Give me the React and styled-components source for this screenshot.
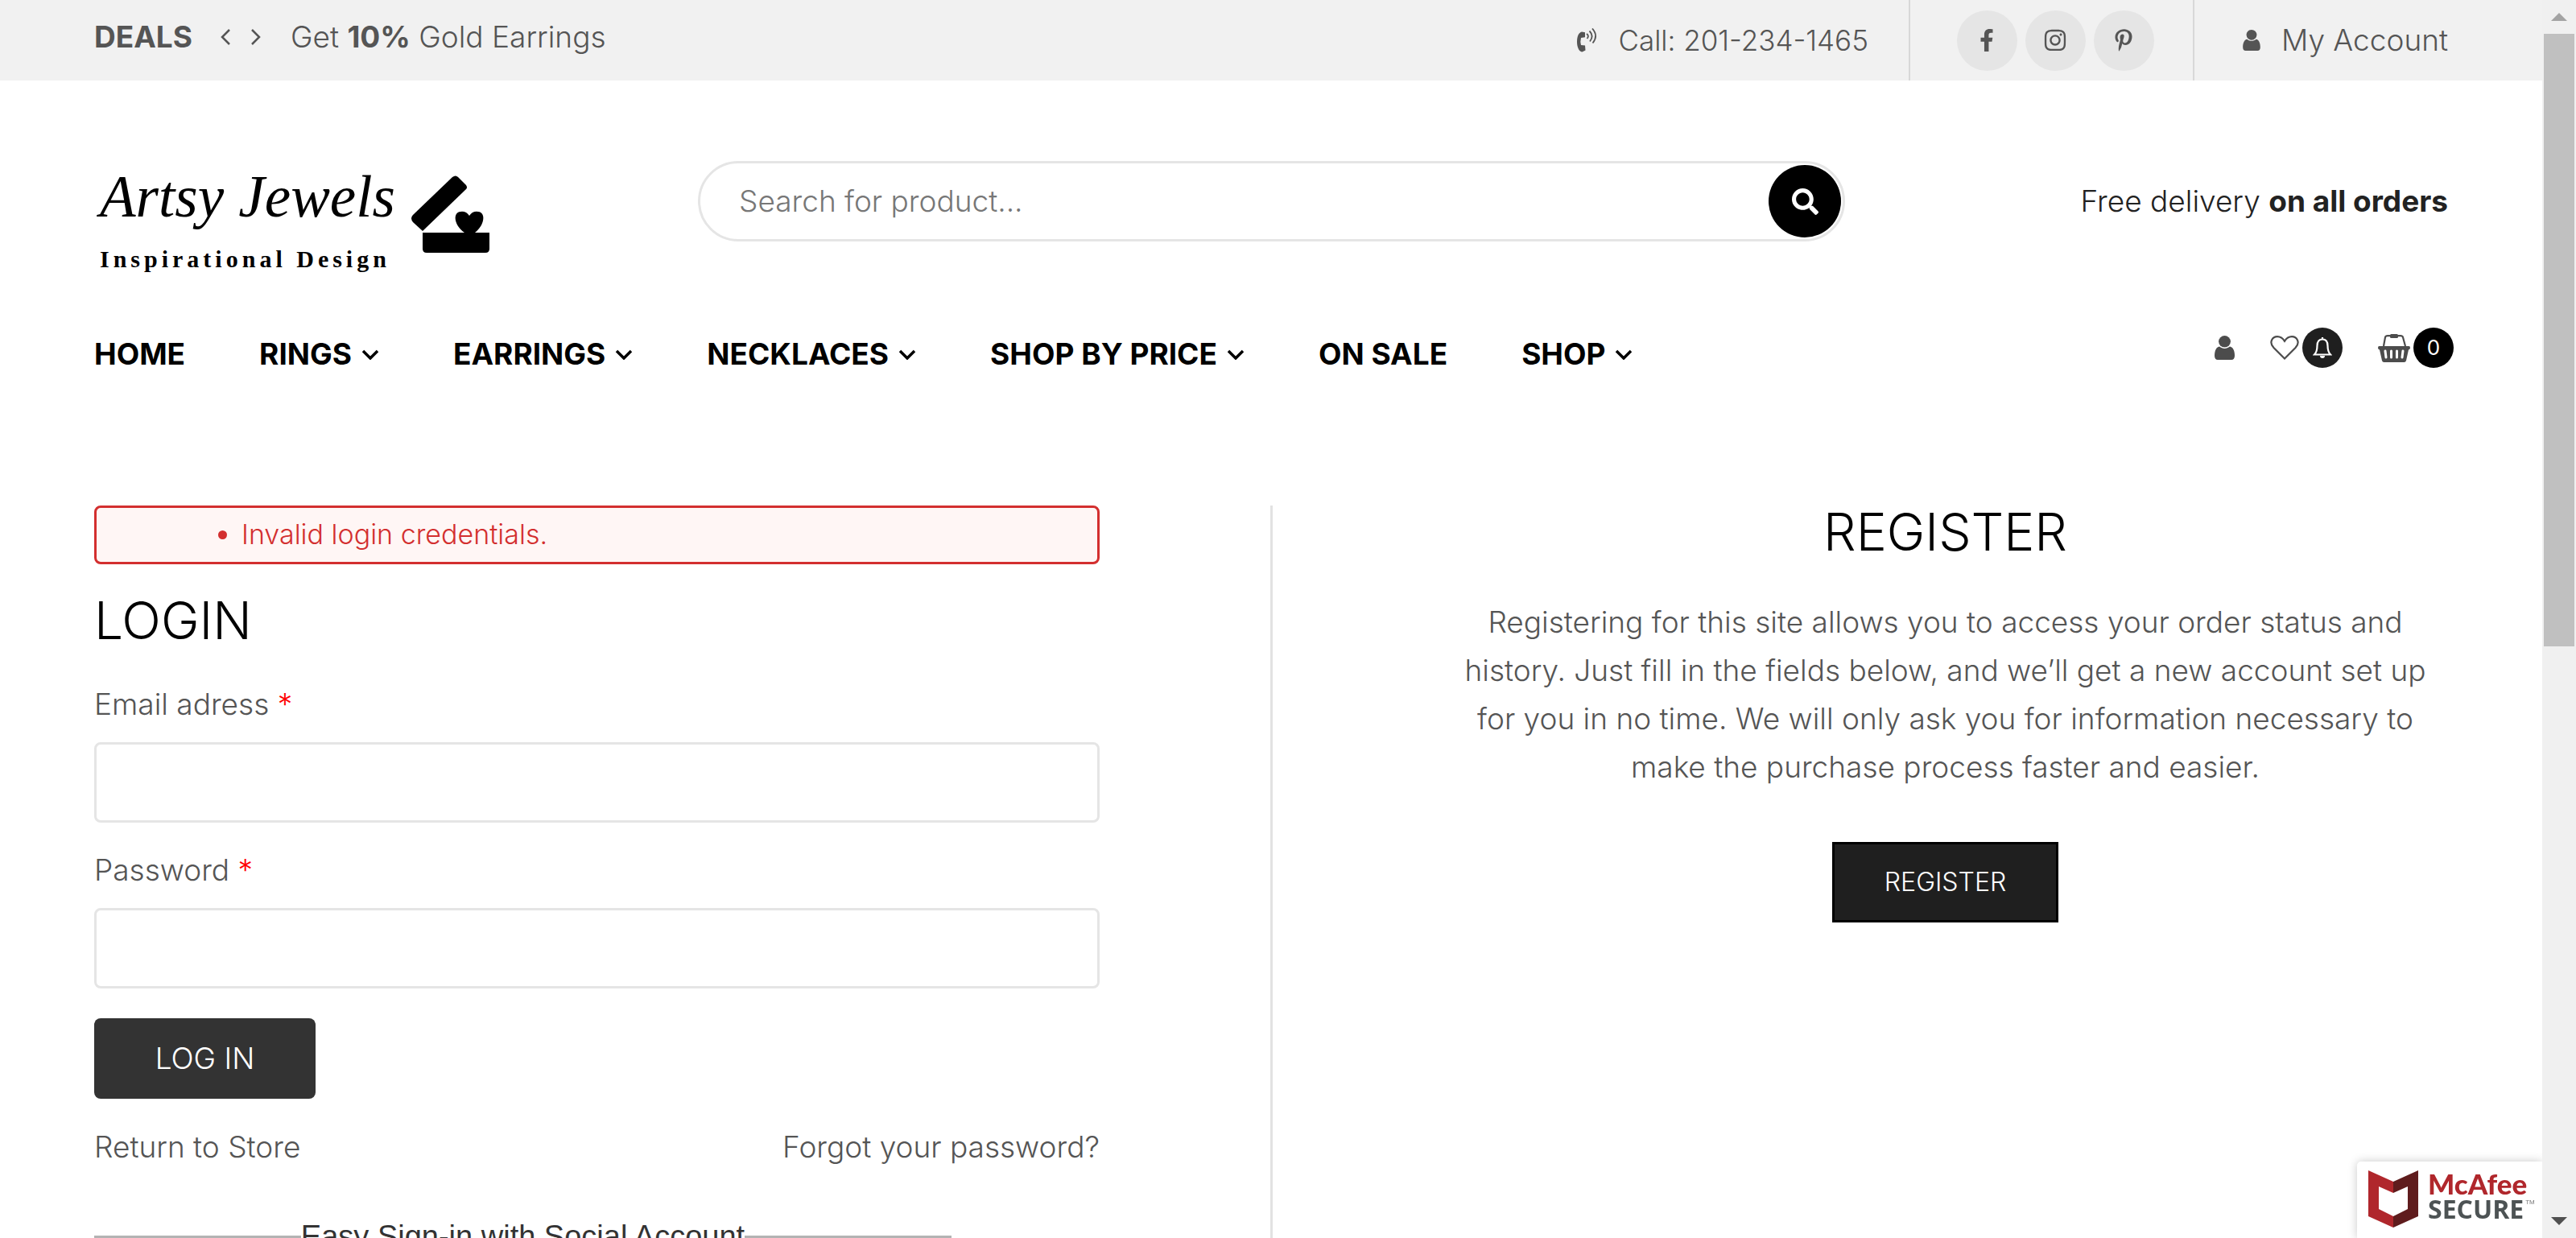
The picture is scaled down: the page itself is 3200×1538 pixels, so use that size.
import React from "react";
import styled, { createGlobalStyle } from "styled-components";
import { FaFacebookF, FaInstagram, FaPinterestP, FaSearch } from "react-icons/fa";

const Global = createGlobalStyle`
  *, *::before, *::after { box-sizing: border-box; }
  body {
    margin: 0;
    background: #fff;
    color: #555;
    font-family: Inter, "Open Sans", sans-serif;
    font-size: 37px;
    font-weight: 300;
    line-height: 60px;
    overflow: hidden;
  }
  b { font-weight: 700; }
  a { color: inherit; text-decoration: none; }
  button, input { font: inherit; color: inherit; }
  svg { display: block; flex: none; }
`;

const Window = styled.div`
  display: grid;
  grid-template-columns: minmax(0, 1fr) 42px;
  height: 100vh;
  overflow: hidden;
`;

const Page = styled.div`
  height: 100vh;
  overflow: hidden;
`;

const ScrollTrack = styled.div`
  display: flex;
  flex-direction: column;
  align-items: center;
  background: #f0f0f0;
  height: 100vh;
`;

const ScrollThumb = styled.div`
  width: 38px;
  height: 761px;
  background: #c0c0c0;
`;

const ScrollArrow = styled.div`
  display: flex;
  align-items: center;
  justify-content: center;
  height: 42px;
  margin-top: ${(p) => (p.$end ? "auto" : 0)};
`;

const TopBar = styled.div`
  display: flex;
  align-items: stretch;
  justify-content: space-between;
  height: 100px;
  padding: 0 117px;
  background: #f1f1f1;
`;

const Deals = styled.div`
  display: flex;
  align-items: center;
  padding-bottom: 8px;
`;

const Arrows = styled.div`
  display: flex;
  gap: 24px;
  margin: 0 37px 0 35px;
`;

const ArrowButton = styled.button`
  padding: 0;
  border: 0;
  background: none;
  cursor: pointer;
`;

const TopLinks = styled.div`
  display: flex;
`;

const TopLink = styled.a`
  display: flex;
  align-items: center;
  gap: 26px;
  font-size: ${(p) => (p.$phone ? "35px" : "37px")};
`;

const Social = styled.div`
  display: flex;
  align-items: center;
  gap: 10px;
  margin-left: 50px;
  margin-right: 60px;
  padding: 0 48px 0 58px;
  border: solid #d8d8d8;
  border-width: 0 2px;
`;

const SocialLink = styled.a`
  display: flex;
  align-items: center;
  justify-content: center;
  width: 75px;
  height: 75px;
  border-radius: 50%;
  background: #e5e5e5;
`;

const Masthead = styled.header`
  display: grid;
  grid-template-columns: 750px minmax(0, 1425px) 1fr;
  align-items: start;
  padding: 92px 117px 0;
`;

const Logo = styled.a`
  display: flex;
  align-items: flex-start;
  gap: 14px;
  height: 158px;
  color: #000;
`;

const LogoWords = styled.span`
  display: flex;
  flex-direction: column;
  padding-left: 7px;
  width: 380px;
`;

const Script = styled.span`
  font: italic 73px/106px "Liberation Serif", serif;
  white-space: nowrap;
`;

const Tagline = styled.span`
  font: bold 30px/48px "Liberation Serif", serif;
  letter-spacing: 5px;
  white-space: nowrap;
`;

const BoxMark = styled.svg`
  margin-top: 26px;
`;

const Search = styled.form`
  display: flex;
  align-items: center;
  height: 100px;
  margin-top: 8px;
  padding: 0 2px 0 48px;
  border: 3px solid #e5e5e5;
  border-radius: 50px;
`;

const SearchInput = styled.input`
  flex: 1;
  min-width: 0;
  padding: 0;
  border: 0;
  outline: 0;
  background: none;
  &::placeholder { color: #777; opacity: 1; }
`;

const SearchButton = styled.button`
  display: flex;
  align-items: center;
  justify-content: center;
  width: 90px;
  height: 90px;
  padding: 0;
  border: 0;
  border-radius: 50%;
  background: #000;
  color: #fff;
`;

const Delivery = styled.p`
  margin: 28px 0 0;
  color: #222;
  text-align: right;
`;

const NavRow = styled.div`
  display: flex;
  justify-content: space-between;
  align-items: flex-start;
  padding: 52px 110px 0 117px;
  height: 278px;
`;

const Nav = styled.nav`
  display: flex;
  gap: 92px;
  padding-top: 8px;
`;

const NavLink = styled.a`
  display: flex;
  align-items: center;
  gap: 12px;
  color: #000;
  font-weight: 700;
  white-space: nowrap;
`;

const Tools = styled.div`
  display: flex;
  align-items: center;
  gap: 44px;
  height: 60px;
  color: #4c4c4c;
`;

const Tool = styled.a`
  display: flex;
  align-items: center;
  gap: 4px;
`;

const Badge = styled.span`
  display: flex;
  align-items: center;
  justify-content: center;
  width: 50px;
  height: 50px;
  border-radius: 50%;
  background: ${(p) => p.$bg};
  color: #fff;
  font-size: 26px;
  font-weight: 400;
`;

const Main = styled.main`
  display: grid;
  grid-template-columns: minmax(0, 1fr) 426px minmax(0, 1fr);
  padding: 0 117px;
`;

const Rule = styled.div`
  justify-self: center;
  width: 3px;
  background: #e2e2e2;
`;

const LoginForm = styled.form`
  display: flex;
  flex-direction: column;
`;

const ErrorList = styled.ul`
  margin: 0;
  padding: 3px 0 4px 180px;
  border: 3px solid #d32f2f;
  border-radius: 8px;
  background: #fff6f5;
  color: #d32f2f;
  font-size: 34px;
`;

const Heading = styled.h2`
  margin: 0;
  color: #000;
  font-size: 64px;
  font-weight: 300;
  line-height: 66px;
`;

const LoginHeading = styled(Heading)`
  margin: 37px 0 41px;
`;

const Label = styled.label`
  margin-bottom: 17px;
`;

const Star = styled.span`
  color: #f00;
`;

const Field = styled.input`
  width: 100%;
  height: 100px;
  margin-bottom: 29px;
  padding: 0 24px;
  border: 3px solid #e5e5e5;
  border-radius: 8px;
  background: #fff;
`;

const LoginButton = styled.button`
  align-self: flex-start;
  width: 275px;
  height: 100px;
  margin: 8px 0 30px;
  border: 0;
  border-radius: 8px;
  background: #333;
  color: #fff;
`;

const FormLinks = styled.div`
  display: flex;
  justify-content: space-between;
`;

const SocialSignIn = styled.fieldset`
  width: 1065px;
  height: 200px;
  margin: 60px 0 0;
  padding: 0;
  border: 3px solid #b3b3b3;
`;

const Legend = styled.legend`
  margin: 0 auto;
  padding: 0;
  color: #333;
  font: 38px/42px "Liberation Sans", Arial, sans-serif;
`;

const RegisterPanel = styled.section`
  display: flex;
  flex-direction: column;
  align-items: center;
  min-height: 1000px;
  text-align: center;
`;

const Copy = styled.p`
  margin: 49px 0 63px;
  padding: 0 16px;
`;

const RegisterButton = styled.button`
  width: 281px;
  height: 100px;
  border: 3px solid #000;
  background: #1f1f1f;
  color: #fff;
  font-size: 32px;
`;

const Seal = styled.aside`
  position: fixed;
  right: 42px;
  bottom: 0;
  display: flex;
  gap: 12px;
  width: 230px;
  height: 95px;
  padding: 11px 0 0 14px;
  border-top-left-radius: 5px;
  background: #fff;
  box-shadow: 0 0 12px rgba(0, 0, 0, 0.22);
  clip-path: inset(-20px 0 0 -20px);
`;

const SealWords = styled.div`
  display: flex;
  flex-direction: column;
`;

const SealWord = styled.span`
  color: ${(p) => p.$color};
  font: ${(p) => p.$font};
`;

const SealLine = styled.div`
  display: flex;
`;

const Trade = styled.span`
  margin-left: 2px;
  color: #777;
  font: 8px/16px "Liberation Sans", sans-serif;
`;

const Chevron = ({ dir = "down", color = "#000" }) => {
  const down = dir === "down";
  const d = { down: "M2 2l9 9 9-9", left: "M11 1L2 10l9 9", right: "M2 1l9 9-9 9" }[dir];
  return (
    <svg width={down ? 22 : 13} height={down ? 13 : 20} fill="none" stroke={color} strokeWidth={down ? 3.5 : 2.5} aria-hidden="true">
      <path d={d} />
    </svg>
  );
};

const UserIcon = ({ width, height }) => (
  <svg width={width} height={height} viewBox="0 0 25 30" fill="currentColor" aria-hidden="true">
    <ellipse cx="12.5" cy="7.3" rx="7.4" ry="7.3" />
    <path d="M6 13.5C2 14 0 19 0 25c0 3 1.500 5 4 5h17c2.500 0 4-2 4-5 0-6-2-11-6-11.500-4 3.300-9 3.300-13 0z" />
  </svg>
);

const PhoneIcon = () => (
  <svg width="25" height="30" viewBox="0 0 25 30" fill="none" stroke="currentColor" strokeWidth="1.8" aria-hidden="true">
    <path d="M6 4.500l4 .8v6l-5 .7q-1.300 5 0 9l5 .5 .500 6-4 2C3 29.500 0 24 0 17S2 5.500 6 4.500z" fill="currentColor" stroke="none" />
    <path d="M12 7q3.500 2.500 .5 6M15.500 3.500q6 6 .5 13M19 .5q8 9 .5 18" />
  </svg>
);

const HeartIcon = () => (
  <svg width="36" height="30" viewBox="0 0 36 30" fill="none" stroke="currentColor" strokeWidth="2.200" aria-hidden="true">
    <path d="M18 28.500L4.500 15C-2 8 3 1.200 9 1.200c4 0 7 2.500 9 5.600 2-3.100 5-5.600 9-5.600 6 0 11 6.800 4.500 13.800z" />
  </svg>
);

const BellIcon = () => (
  <svg width="24" height="26" viewBox="0 0 24 26" fill="none" stroke="currentColor" strokeWidth="2.200" aria-hidden="true">
    <path d="M12 0v2M2 21.500c3-3 3.500-6 3.500-11C5.500 5 8 2.500 12 2.500s6.500 2.500 6.500 8c0 5 .5 8 3.500 11z" />
    <path d="M9 23a3 3 0 0 0 6 0z" fill="currentColor" stroke="none" />
  </svg>
);

const BasketIcon = () => (
  <svg width="40" height="35" viewBox="0 0 40 35" aria-hidden="true">
    <path d="M7 15L9 4q.5-1.800 3-1.800h16q2.500 0 3 1.800l3 11" fill="none" stroke="currentColor" strokeWidth="2.200" />
    <rect x="15" y="0" width="10" height="5" rx="1.500" fill="currentColor" />
    <path d="M1.500 15h37q1.500 0 1.500 2t-2 2.500l-3 13.500q-.5 2-2.500 2h-25q-2 0-2.500-2L2 19.500Q0 19 0 17t1.500-2z" fill="currentColor" />
    <path d="M9 21l1 8M16.500 21v8M23.500 21v8M31 21l-1 8" stroke="#fff" strokeWidth="3" strokeLinecap="round" />
  </svg>
);

const NAV = [
  ["HOME", false],
  ["RINGS", true],
  ["EARRINGS", true],
  ["NECKLACES", true],
  ["SHOP BY PRICE", true],
  ["ON SALE", false],
  ["SHOP", true],
];

export default function App() {
  return (
    <Window>
      <Global />
      <Page>
        <TopBar>
          <Deals>
            <b>DEALS</b>
            <Arrows>
              <ArrowButton type="button" aria-label="Previous deal"><Chevron dir="left" color="#555" /></ArrowButton>
              <ArrowButton type="button" aria-label="Next deal"><Chevron dir="right" color="#555" /></ArrowButton>
            </Arrows>
            <span>Get <b>10%</b> Gold Earrings</span>
          </Deals>
          <TopLinks>
            <TopLink $phone href="tel:2012341465"><PhoneIcon />Call: 201-234-1465</TopLink>
            <Social>
              <SocialLink href="#facebook" aria-label="Facebook"><FaFacebookF size={28} /></SocialLink>
              <SocialLink href="#instagram" aria-label="Instagram"><FaInstagram size={30} /></SocialLink>
              <SocialLink href="#pinterest" aria-label="Pinterest"><FaPinterestP size={28} /></SocialLink>
            </Social>
            <TopLink href="#account"><UserIcon width={22} height={26} />My Account</TopLink>
          </TopLinks>
        </TopBar>

        <Masthead>
          <Logo href="#home">
            <LogoWords>
              <Script>Artsy Jewels</Script>
              <Tagline>Inspirational Design</Tagline>
            </LogoWords>
            <BoxMark width="97" height="97" viewBox="0 0 97 97" aria-hidden="true">
              <path d="M51 2q4-3 7 0l10 10q2 3 0 5L14 69 2 58q-4-5 0-9z" />
              <path d="M14 71h83v20q0 5-5 5H19q-5 0-5-5z" />
              <path d="M66 71C53 62 51 46 61 45q7-1 11 5 4-6 11-5c10 1 8 17-4 26z" />
            </BoxMark>
          </Logo>
          <Search role="search">
            <SearchInput type="text" aria-label="Search for product" placeholder="Search for product..." />
            <SearchButton type="button" aria-label="Search"><FaSearch size={33} /></SearchButton>
          </Search>
          <Delivery>Free delivery <b>on all orders</b></Delivery>
        </Masthead>

        <NavRow>
          <Nav>
            {NAV.map(([name, menu]) => (
              <NavLink key={name} href="#shop">{name}{menu && <Chevron />}</NavLink>
            ))}
          </Nav>
          <Tools>
            <Tool href="#account" aria-label="Account"><UserIcon width={25} height={30} /></Tool>
            <Tool href="#wishlist" aria-label="Wishlist"><HeartIcon /><Badge $bg="#1f1f1f"><BellIcon /></Badge></Tool>
            <Tool href="#cart" aria-label="Cart"><BasketIcon /><Badge $bg="#000">0</Badge></Tool>
          </Tools>
        </NavRow>

        <Main>
          <LoginForm>
            <ErrorList><li>Invalid login credentials.</li></ErrorList>
            <LoginHeading>LOGIN</LoginHeading>
            <Label htmlFor="email">Email adress <Star>*</Star></Label>
            <Field id="email" type="email" />
            <Label htmlFor="password">Password <Star>*</Star></Label>
            <Field id="password" type="password" />
            <LoginButton type="button">LOG IN</LoginButton>
            <FormLinks>
              <a href="#store">Return to Store</a>
              <a href="#forgot">Forgot your password?</a>
            </FormLinks>
            <SocialSignIn>
              <Legend>Easy Sign-in with Social Account</Legend>
            </SocialSignIn>
          </LoginForm>
          <Rule />
          <RegisterPanel>
            <Heading>REGISTER</Heading>
            <Copy>
              Registering for this site allows you to access your order status and history. Just fill in the
              fields below, and we’ll get a new account set up for you in no time. We will only ask you for
              information necessary to make the purchase process faster and easier.
            </Copy>
            <RegisterButton type="button">REGISTER</RegisterButton>
          </RegisterPanel>
        </Main>
      </Page>

      <ScrollTrack aria-hidden="true">
        <ScrollArrow><svg width="20" height="10"><path d="M0 10L10 0l10 10z" fill="#a3a3a3" /></svg></ScrollArrow>
        <ScrollThumb />
        <ScrollArrow $end><svg width="20" height="10"><path d="M0 0h20L10 10z" fill="#505050" /></svg></ScrollArrow>
      </ScrollTrack>

      <Seal>
        <svg width="62" height="71" viewBox="0 0 62 71" aria-hidden="true">
          <path d="M0 0l31 14v14L13 20v28l18 9v14L0 57z" fill="#b0272c" />
          <path d="M62 0L31 14v14l18-8v28l-18 9v14l31-14z" fill="#5f1c1d" />
        </svg>
        <SealWords>
          <SealWord $color="#b0272c" $font='900 35px/32px Lato, sans-serif'>McAfee</SealWord>
          <SealLine>
            <SealWord $color="#4d5354" $font='700 32px/32px "Open Sans", sans-serif'>SECURE</SealWord>
            <Trade>TM</Trade>
          </SealLine>
        </SealWords>
      </Seal>
    </Window>
  );
}
